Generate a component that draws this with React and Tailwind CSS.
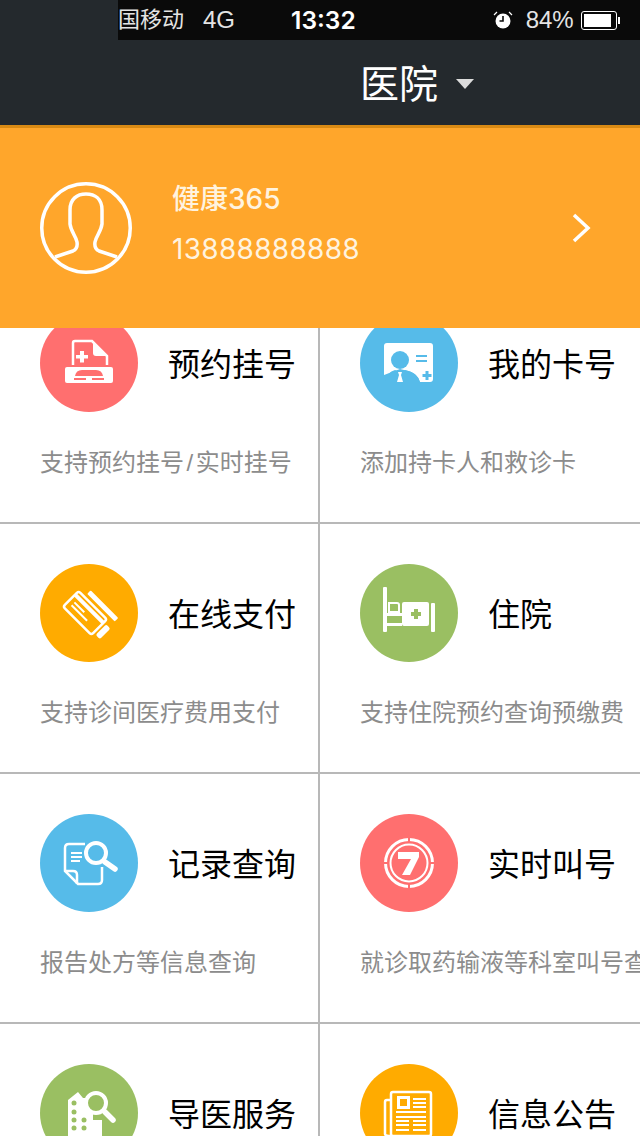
const CJK = "font-['Liberation_Sans','Noto_Sans_CJK_SC',sans-serif]";

const PinkIcon = () => (
  <svg viewBox="0 0 98 98" className="w-[98px] h-[98px]">
    <path d="M33 51V29q0-2 2-2h17l15 15v9" fill="none" stroke="#fff" strokeWidth="2.5" />
    <path d="M53 28v11q0 3 3 3h10z" fill="#fff" />
    <path d="M40 37h4v4h4v3.500h-4v4h-4v-4h-4V41h4z" fill="#fff" />
    <path d="M25 55q0-2 2-2h44q2 0 2 2v12q0 2-2 2H27q-2 0-2-2z" fill="#fff" />
    <path d="M35 62q1-6 7-6h14q6 0 7 6z" fill="#ff6f6f" />
    <path d="M34 64h12v2H34zM52 64h12v2H52z" fill="#ff6f6f" />
  </svg>
);

const BlueCardIcon = () => (
  <svg viewBox="0 0 98 98" className="w-[98px] h-[98px]">
    <path d="M24 32q0-3 3-3h43q3 0 3 3v33q0 3-3 3H60q-3-9-12-11l-8-2-16 6z" fill="#fff" />
    <circle cx="40" cy="46" r="9" fill="#56bbe9" />
    <path d="M25 68q2-10 10-12l5 2 5-2q12 2 15 12z" fill="#56bbe9" />
    <path d="M38 58h4l-1 3 2 7h-6l2-7z" fill="#fff" />
    <path d="M56 41h11v2H56zM56 46h11v2H56z" fill="#56bbe9" />
    <path d="M65.500 57h3v3h3v3h-3v3h-3v-3h-3v-3h3z" fill="#56bbe9" />
  </svg>
);

const CardsIcon = () => (
  <svg viewBox="0 0 98 98" className="w-[98px] h-[98px]">
    <g transform="translate(45 49) rotate(45)">
      <rect x="-20" y="-11" width="40" height="22" rx="2.500" fill="none" stroke="#fff" strokeWidth="2.500" />
      <rect x="-20" y="-8" width="40" height="4" fill="#fff" />
      <path d="M-15 -1h14v2h-14zM-15 3h22v2h-22z" fill="#fff" />
      <rect x="-12" y="-20" width="39" height="5" rx="1" fill="#fff" />
      <rect x="23" y="-7" width="6" height="15" rx="2" fill="#fff" />
    </g>
  </svg>
);

const BedIcon = () => (
  <svg viewBox="0 0 98 98" className="w-[98px] h-[98px]">
    <rect x="23" y="23" width="4" height="45" rx="1" fill="#fff" />
    <path d="M29 39h8q2 0 2 2v7H29z" fill="none" stroke="#fff" strokeWidth="2" />
    <rect x="27" y="49" width="15" height="3" fill="#fff" />
    <rect x="27" y="59" width="15" height="3" fill="#fff" />
    <rect x="42" y="38" width="27" height="24" rx="2" fill="#fff" />
    <rect x="71" y="39" width="4" height="29" rx="1" fill="#fff" />
    <path d="M54 45h4v3h3v4h-3v3h-4v-3h-3v-4h3z" fill="#9abf62" />
  </svg>
);

const RecordIcon = () => (
  <svg viewBox="0 0 98 98" className="w-[98px] h-[98px]">
    <path d="M45 30H29q-4 0-4 4v23l13 13h20q4 0 4-4V53" fill="none" stroke="#fff" strokeWidth="2.500" />
    <path d="M25 57h8q4 0 4 4v9" fill="none" stroke="#fff" strokeWidth="2.500" />
    <path d="M31 38h11v2H31zM31 42h11v2H31zM31 46h9v2H31z" fill="#fff" />
    <circle cx="56" cy="39" r="10" fill="none" stroke="#fff" strokeWidth="4" />
    <path d="M65 48l10 7" stroke="#fff" strokeWidth="5.500" strokeLinecap="round" />
  </svg>
);

const CallIcon = () => (
  <svg viewBox="0 0 98 98" className="w-[98px] h-[98px]">
    <circle cx="49" cy="49" r="23.500" fill="none" stroke="#fff" strokeWidth="3" />
    <circle cx="49" cy="49" r="18.500" fill="none" stroke="#fff" strokeWidth="2" />
    <path d="M49 23v6M49 69v6M23 49h6M69 49h6" stroke="#ff6f6f" strokeWidth="2" />
    <path d="M38 38h21v5L50 61h-8l9-16H38z" fill="#fff" />
  </svg>
);

const GuideIcon = () => (
  <svg viewBox="0 0 98 98" className="w-[98px] h-[98px]">
    <path d="M28 36l10-8 5 6h10v38H28z" fill="#fff" />
    <rect x="53" y="56" width="9" height="16" fill="#fff" />
    <g fill="#9abf62">
      <circle cx="34" cy="39" r="2.500" />
      <circle cx="34" cy="48" r="2.500" />
      <circle cx="34" cy="56" r="2.500" />
      <circle cx="44" cy="56" r="2.500" />
      <circle cx="34" cy="64" r="2.500" />
      <circle cx="44" cy="64" r="2.500" />
    </g>
    <circle cx="56" cy="39" r="10" fill="#9abf62" stroke="#fff" strokeWidth="4" />
    <path d="M65 48l8 8" stroke="#fff" strokeWidth="5.500" strokeLinecap="round" />
  </svg>
);

const NewsIcon = () => (
  <svg viewBox="0 0 98 98" className="w-[98px] h-[98px]">
    <rect x="31" y="28" width="40" height="44" rx="2" fill="none" stroke="#fff" strokeWidth="2.500" />
    <path d="M31 36h-4q-2 0-2 2v32q0 2 6 2" fill="none" stroke="#fff" strokeWidth="2.500" />
    <rect x="38.500" y="33.500" width="10" height="10" fill="none" stroke="#fff" strokeWidth="3" />
    <path d="M53 34h13v2H53zM53 38h13v2H53zM53 42h13v2H53zM36 47h30v2H36zM36 52h30v2H36zM36 56h13v2H36zM53 56h13v2H53zM36 60h13v2H36zM53 60h13v2H53zM36 65h13v2H36zM53 65h13v2H53z" fill="#fff" />
  </svg>
);

const services = [
  { title: "预约挂号", desc: <>支持预约挂号<span className="px-[2.5px]">/</span>实时挂号</>, color: "bg-[#ff6f6f]", Icon: PinkIcon },
  { title: "我的卡号", desc: "添加持卡人和救诊卡", color: "bg-[#56bbe9]", Icon: BlueCardIcon },
  { title: "在线支付", desc: "支持诊间医疗费用支付", color: "bg-[#ffab00]", Icon: CardsIcon },
  { title: "住院", desc: "支持住院预约查询预缴费", color: "bg-[#9abf62]", Icon: BedIcon },
  { title: "记录查询", desc: "报告处方等信息查询", color: "bg-[#56bbe9]", Icon: RecordIcon },
  { title: "实时叫号", desc: "就诊取药输液等科室叫号查询", color: "bg-[#ff6f6f]", Icon: CallIcon },
  { title: "导医服务", desc: "", color: "bg-[#9abf62]", Icon: GuideIcon },
  { title: "信息公告", desc: "", color: "bg-[#ffab00]", Icon: NewsIcon },
];

const ServiceCell = ({ item, index }) => {
  const { Icon } = item;
  return (
    <div
      className={`h-[250px] pt-10 overflow-hidden border-b-2 border-[#b8b8b8] ${
        index % 2 === 0 ? "w-[320px] pl-10 border-r-2" : "w-[320px] pl-10"
      }`}
    >
      <div className="flex items-center">
        <div className={`w-[98px] h-[98px] rounded-full shrink-0 ${item.color}`}>
          <Icon />
        </div>
        <span className="ml-[30px] pt-1 text-[32px] leading-none text-black whitespace-nowrap">{item.title}</span>
      </div>
      <p className="mt-[37px] text-[24px] leading-[28px] text-[#8c8c8c] whitespace-nowrap">{item.desc}</p>
    </div>
  );
};

export default function App() {
  return (
    <div className={`w-[640px] h-[1136px] overflow-hidden bg-white ${CJK}`}>
      {/* Header */}
      <div className="relative z-10 bg-[#24292d] h-[125px]">
        <div className="ml-[118px] h-10 bg-[#0a0a0a] flex items-center overflow-hidden text-[#e4e4e4] whitespace-nowrap">
          <span className="-ml-[22px] text-[22px] leading-none">中国移动</span>
          <span className="ml-[19px] text-[24px] leading-none">4G</span>
          <span className="ml-[56px] font-['Inter',sans-serif] text-[24.5px] leading-none font-semibold text-white">13:32</span>
          <svg viewBox="0 0 20 20" className="ml-[137px] w-5 h-5 shrink-0">
            <circle cx="10" cy="11" r="7.500" fill="#fff" />
            <path d="M10 6v5H6.500" fill="none" stroke="#0a0a0a" strokeWidth="1.600" />
            <path d="M1 5l3-3M19 5l-3-3" stroke="#fff" strokeWidth="1.200" />
          </svg>
          <span className="ml-[13px] text-[24px] leading-none">84%</span>
          <div className="ml-[7px] w-[36px] h-[19px] shrink-0 border border-white rounded-[3px] p-[2px]">
            <div className="w-[27px] h-full bg-white" />
          </div>
          <div className="ml-px w-[2px] h-[7px] shrink-0 bg-white" />
        </div>
        <div className="flex items-center h-[85px] pl-[360px]">
          <span className="pt-1 text-[39px] leading-none text-white">医院</span>
          <div className="ml-[18px] mt-[2px] w-0 h-0 border-x-[9px] border-x-transparent border-t-[10px] border-t-[#dcdcdc]" />
        </div>
      </div>

      {/* User banner */}
      <div className="relative z-10 h-[203px] bg-[#ffa62b] border-t-[3px] border-t-[#d98a14] flex items-center pl-10 pr-[49px]">
        <svg viewBox="0 0 92 92" className="w-[92px] h-[92px] shrink-0">
          <circle cx="46" cy="46" r="44.250" fill="none" stroke="#fff" strokeWidth="3.500" />
          <path
            d="M15 75L33 69Q38 67 37 60C36 54 31 50 30 42V28C30 17 37 12 46 12S62 17 62 28V42C61 50 56 54 55 60Q54 67 59 69L77 75"
            fill="none"
            stroke="#fff"
            strokeWidth="3.500"
          />
        </svg>
        <div className="ml-10 flex-1 font-['Inter','Noto_Sans_CJK_SC',sans-serif] text-[#fff3df] text-[28px] tracking-[0.3px] leading-[50px] -mt-[9px]">
          <div className="font-medium tracking-normal">健康365</div>
          <div>13888888888</div>
        </div>
        <svg viewBox="0 0 20 32" className="w-5 h-8 shrink-0">
          <path d="M3 3l14 13L3 29" fill="none" stroke="#fff" strokeWidth="3.500" />
        </svg>
      </div>

      {/* Service grid, first row tucked under the banner */}
      <div className="-mt-[54px] flex flex-wrap">
        {services.map((item, i) => (
          <ServiceCell key={item.title} item={item} index={i} />
        ))}
      </div>
    </div>
  );
}
